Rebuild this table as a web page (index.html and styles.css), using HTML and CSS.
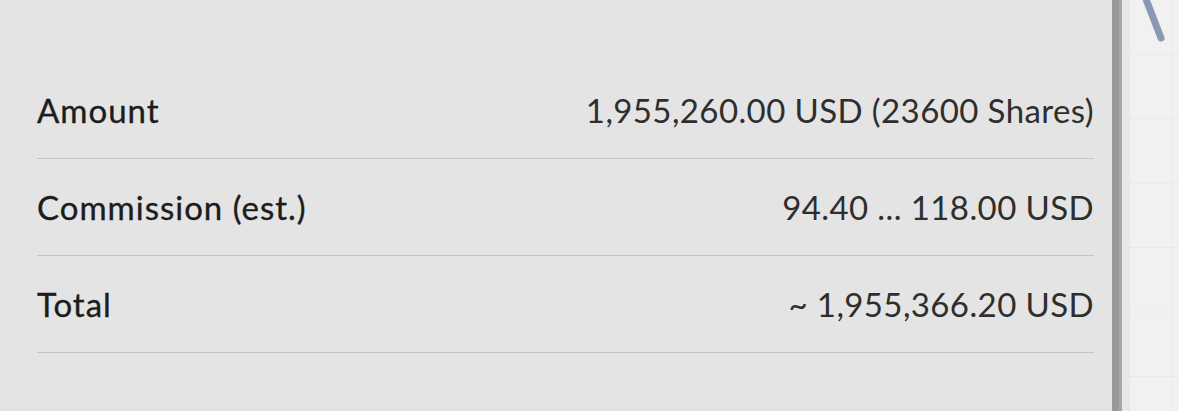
FILE: index.html
```html
<!DOCTYPE html>
<html>
<head>
<meta charset="utf-8">
<link rel="stylesheet" href="styles.css">
</head>
<body>
<div class="screen">
  <section class="panel">
    <div class="row">
      <span class="label">Amount</span>
      <span class="value">1,955,260.00 USD (23600 Shares)</span>
    </div>
    <div class="row">
      <span class="label">Commission (est.)</span>
      <span class="value">94.40 ... 118.00 USD</span>
    </div>
    <div class="row">
      <span class="label">Total</span>
      <span class="value">~ 1,955,366.20 USD</span>
    </div>
  </section>
  <div class="divider"></div>
  <div class="edge"></div>
  <aside class="chart">
    <svg class="curve" width="49" height="60" viewBox="0 0 49 60">
      <path d="M14 -6 L31 38" stroke="#8b98b3" stroke-width="7" stroke-linecap="round" fill="none"/>
    </svg>
  </aside>
</div>
</body>
</html>
```
FILE: styles.css
```css
html, body {
  margin: 0;
  padding: 0;
  background: #e4e4e4;
}
.screen {
  display: flex;
  width: 1179px;
  height: 411px;
  overflow: hidden;
}
.panel {
  width: 1112px;
  box-sizing: border-box;
  padding: 62px 18px 0 37px;
  background: #e4e4e4;
  font-family: Lato, "Noto Sans", sans-serif;
  color: #1c1c1c;
}
.row {
  height: 96px;
  border-bottom: 1px solid #c5c5c5;
  display: flex;
  align-items: center;
  justify-content: space-between;
}
.label {
  font-size: 33px;
  font-weight: 400;
  letter-spacing: 1px;
  -webkit-text-stroke: 0.35px #1c1c1c;
}
.value {
  font-size: 33px;
  font-weight: 400;
  color: #2e2e2e;
  letter-spacing: 0.4px;
}
.divider {
  width: 10px;
  background: linear-gradient(to right, #999 0 7px, #a6a6a6 7px 10px);
}
.edge {
  width: 8px;
  background: #e8e8e8;
}
.chart {
  flex: 1;
  position: relative;
  background-color: #f1f1f1;
  background-image:
    linear-gradient(to bottom, transparent 63px, #e9e9e9 63px, #e9e9e9 64px, transparent 64px),
    linear-gradient(to right, transparent 41px, #e9e9e9 41px, #e9e9e9 42px, transparent 42px);
  background-size: 100% 64.5px, 100% 100%;
  background-position: 0 -9px, 0 0;
}
.curve {
  position: absolute;
  left: 0;
  top: 0;
}
```
